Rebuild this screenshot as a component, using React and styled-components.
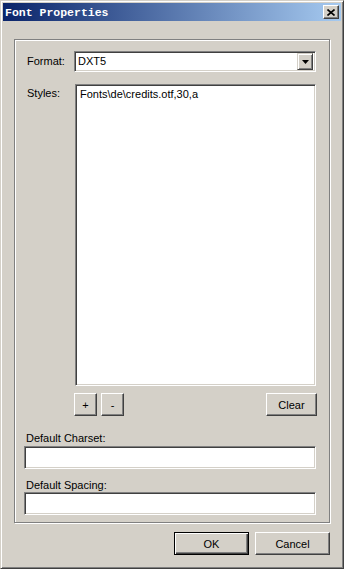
import React from 'react';
import styled, { createGlobalStyle } from 'styled-components';

const GlobalStyle = createGlobalStyle`
    html, body {
        margin: 0;
        padding: 0;
        background: #d4d0c8;
    }
    * {
        box-sizing: border-box;
    }
`;

const Window = styled.div`
    width: 344px;
    height: 569px;
    display: flex;
    flex-direction: column;
    padding: 2px;
    background: #d4d0c8;
    border: 1px solid;
    border-color: #d4d0c8 #404040 #404040 #d4d0c8;
    box-shadow: inset 1px 1px #fff, inset -1px -1px #808080;
    font-family: "Liberation Sans", Arial, sans-serif;
    font-size: 11px;
    color: #000;
`;

const TitleBar = styled.div`
    height: 18px;
    display: flex;
    align-items: center;
    justify-content: space-between;
    padding: 0 2px 0 2px;
    background: linear-gradient(to right, #0a246a, #a6caf0);
`;

const Title = styled.span`
    font-family: "Liberation Mono", "Courier New", monospace;
    font-weight: bold;
    font-size: 11.5px;
    color: #fff;
    letter-spacing: 0;
`;

const CloseButton = styled.div`
    width: 16px;
    height: 14px;
    display: flex;
    align-items: center;
    justify-content: center;
    background: #d4d0c8;
    border: 1px solid;
    border-color: #fff #404040 #404040 #fff;
    box-shadow: inset -1px -1px #808080;
`;

const Body = styled.div`
    flex: 1;
    display: flex;
    flex-direction: column;
    padding: 18px 11px 0 11px;
`;

const Group = styled.div`
    width: 316px;
    height: 484px;
    display: flex;
    flex-direction: column;
    padding: 11px 0 7px 9px;
    border: 1px solid #808080;
    box-shadow: inset 1px 1px #fff, 1px 1px #fff;
`;

const Row = styled.div`
    display: flex;
    align-items: ${p => p.$top ? 'flex-start' : 'center'};
    margin-top: ${p => p.$mt || 0}px;
`;

const Label = styled.div`
    width: ${p => p.$w}px;
    padding-left: 3px;
    padding-top: ${p => p.$pt || 0}px;
    line-height: 13px;
    white-space: nowrap;
`;

const sunken = `
    background: #fff;
    border: 1px solid;
    border-color: #808080 #fff #fff #808080;
    box-shadow: inset 1px 1px #404040, inset -1px -1px #d4d0c8;
`;

const Select = styled.div`
    ${sunken}
    width: 242px;
    height: 21px;
    display: flex;
    align-items: center;
    justify-content: space-between;
    padding: 2px 2px 2px 3px;
    line-height: 13px;
`;

const DropButton = styled.div`
    width: 16px;
    height: 17px;
    display: flex;
    align-items: center;
    justify-content: center;
    background: #d4d0c8;
    border: 1px solid;
    border-color: #d4d0c8 #404040 #404040 #d4d0c8;
    box-shadow: inset 1px 1px #fff, inset -1px -1px #808080;
`;

const ListBox = styled.div`
    ${sunken}
    width: 241px;
    height: 302px;
    padding: 3px 4px;
    line-height: 13px;
`;

const ButtonRow = styled.div`
    display: flex;
    width: 293px;
    margin-top: 7px;
    padding-left: 50px;
    gap: 4px;
`;

const Button = styled.button`
    width: ${p => p.$w}px;
    height: 23px;
    margin-left: ${p => p.$push ? 'auto' : '0'};
    padding: 0;
    background: #d4d0c8;
    border: 1px solid;
    border-color: ${p => p.$default ? '#000' : '#fff #404040 #404040 #fff'};
    box-shadow: ${p => p.$default
        ? 'inset 1px 1px #fff, inset -1px -1px #404040, inset -2px -2px #808080'
        : 'inset -1px -1px #808080'};
    font-family: "Liberation Sans", Arial, sans-serif;
    font-size: 11px;
    color: #000;
`;

const FieldLabel = styled.div`
    height: 13px;
    line-height: 13px;
    padding-left: 2px;
    margin-top: ${p => p.$mt}px;
`;

const TextBox = styled.div`
    ${sunken}
    width: 292px;
    height: 23px;
    margin-top: ${p => p.$mt || 0}px;
`;

const Footer = styled.div`
    display: flex;
    justify-content: flex-end;
    gap: 6px;
    margin-top: 9px;
`;

const CloseIcon = () => (
    <svg width="8" height="7" viewBox="0 0 8 7">
        <path d="M0.5 0.5 L7.5 6.5 M7.5 0.5 L0.5 6.5" stroke="#000" strokeWidth="1.6" fill="none" />
    </svg>
);

const ArrowIcon = () => (
    <svg width="7" height="4" viewBox="0 0 7 4">
        <path d="M0 0 H7 L3.5 4 Z" fill="#000" />
    </svg>
);

export default function App() {
    return (
        <>
            <GlobalStyle />
            <Window>
                <TitleBar>
                    <Title>Font Properties</Title>
                    <CloseButton><CloseIcon /></CloseButton>
                </TitleBar>
                <Body>
                    <Group>
                        <Row>
                            <Label $w={50}>Format:</Label>
                            <Select>
                                <span>DXT5</span>
                                <DropButton><ArrowIcon /></DropButton>
                            </Select>
                        </Row>
                        <Row $top $mt={12}>
                            <Label $w={51} $pt={3}>Styles:</Label>
                            <ListBox>Fonts\de\credits.otf,30,a</ListBox>
                        </Row>
                        <ButtonRow>
                            <Button $w={23}>+</Button>
                            <Button $w={23}>-</Button>
                            <Button $w={51} $push>Clear</Button>
                        </ButtonRow>
                        <FieldLabel $mt={16}>Default Charset:</FieldLabel>
                        <TextBox $mt={1} />
                        <FieldLabel $mt={10}>Default Spacing:</FieldLabel>
                        <TextBox />
                    </Group>
                    <Footer>
                        <Button $w={75} $default>OK</Button>
                        <Button $w={75}>Cancel</Button>
                    </Footer>
                </Body>
            </Window>
        </>
    );
}
